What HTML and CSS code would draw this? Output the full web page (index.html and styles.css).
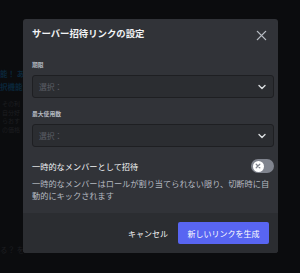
FILE: index.html
```html
<!DOCTYPE html>
<html lang="ja">
<head>
  <meta charset="UTF-8">
  <title>サーバー招待リンクの設定</title>
  <link rel="stylesheet" href="styles.css">
</head>
<body>

  <!-- page behind the dimmed overlay -->
  <div class="page">
    <p class="bg-link">能！ あ<br>択機能</p>
    <p class="bg-text">その利<br>自分好<br>らおす<br>の価格</p>
    <p class="bg-text bottom">る？ を</p>
  </div>

  <!-- Invite settings modal -->
  <div class="modal">
    <div class="modal-header">
      <h2>サーバー招待リンクの設定</h2>
      <svg class="close" width="11" height="11" viewBox="0 0 12 12">
        <path d="M1.5 1.5 L10.5 10.5 M10.5 1.5 L1.5 10.5" stroke="#b5bac1" stroke-width="1.5" stroke-linecap="round"/>
      </svg>
    </div>

    <div class="modal-body">
      <div class="field">
        <label class="field-label">期限</label>
        <div class="select">
          <span>選択：</span>
          <svg width="8" height="6" viewBox="0 0 8 6"><path d="M1 1.5 L4 4.5 L7 1.5" fill="none" stroke="#dbdee1" stroke-width="1.4" stroke-linecap="round" stroke-linejoin="round"/></svg>
        </div>
      </div>

      <div class="field">
        <label class="field-label">最大使用数</label>
        <div class="select">
          <span>選択：</span>
          <svg width="8" height="6" viewBox="0 0 8 6"><path d="M1 1.5 L4 4.5 L7 1.5" fill="none" stroke="#dbdee1" stroke-width="1.4" stroke-linecap="round" stroke-linejoin="round"/></svg>
        </div>
      </div>

      <div class="toggle-row">
        <span>一時的なメンバーとして招待</span>
        <div class="toggle">
          <div class="knob">
            <svg width="6" height="6" viewBox="0 0 6 6"><path d="M1.2 1.2 L4.8 4.8 M4.8 1.2 L1.2 4.8" stroke="#80848e" stroke-width="1.3" stroke-linecap="round"/></svg>
          </div>
        </div>
      </div>
      <p class="note">一時的なメンバーはロールが割り当てられない限り、切断時に自動的にキックされます</p>
    </div>

    <div class="modal-footer">
      <button class="btn-link">キャンセル</button>
      <button class="btn-primary">新しいリンクを生成</button>
    </div>
  </div>

</body>
</html>
```

FILE: styles.css
```css
body { margin: 0; width: 300px; height: 273px; overflow: hidden; background: #0b0c0e; font-family: "Noto Sans CJK JP", "Noto Sans", sans-serif; position: relative; }

.page { padding-top: 67px; }
.bg-link { margin: 0; font-size: 7.5px; line-height: 13px; font-weight: bold; color: #0a2639; }
.bg-text { margin: 7px 0 0 2px; font-size: 6px; line-height: 8.7px; color: #1d1e21; }
.bg-text.bottom { margin: 111px 0 0; font-size: 7.5px; }

.modal { position: absolute; left: 23px; top: 19px; width: 255px; height: 234px; background: #313338; border-radius: 3px; display: flex; flex-direction: column; overflow: hidden; }

.modal-header { display: flex; justify-content: space-between; align-items: center; padding: 7px 11px 0 9px; height: 14px; }
.modal-header h2 { margin: 0; font-size: 9.4px; font-weight: bold; color: #f2f3f5; line-height: 14px; }
.close { margin-top: 4px; }

.modal-body { padding: 0 4px 0 9px; flex: 1; }
.field { margin-top: 21px; }
.field + .field { margin-top: 12px; }
.field-label { display: block; font-size: 5.8px; font-weight: bold; color: #b5bac1; line-height: 8px; margin-bottom: 6px; }

.select { height: 21px; background: #2b2d31; border: 1px solid #1e1f22; border-radius: 3px; display: flex; align-items: center; justify-content: space-between; padding: 0 7px 0 6px; }
.select span { font-size: 7.8px; color: #5c5e66; }

.toggle-row { display: flex; justify-content: space-between; align-items: center; margin-top: 12px; height: 14px; }
.toggle-row span { font-size: 8.2px; color: #f2f3f5; }
.toggle { width: 23px; height: 14px; background: #80848e; border-radius: 7px; display: flex; align-items: center; padding-left: 1.5px; box-sizing: border-box; }
.knob { width: 11px; height: 11px; border-radius: 50%; background: #fff; display: flex; align-items: center; justify-content: center; }

.note { margin: 4px 0 0; font-size: 8.2px; line-height: 12px; color: #b5bac1; }

.modal-footer { height: 40px; background: #2b2d31; display: flex; justify-content: flex-end; align-items: center; padding: 0 9px; gap: 10px; }
.modal-footer button { font-family: inherit; font-size: 8px; border: 0; cursor: pointer; }
.btn-link { background: none; color: #f2f3f5; padding: 0; }
.btn-primary { background: #5865f2; color: #fff; height: 22px; width: 91px; border-radius: 2px; }
```
